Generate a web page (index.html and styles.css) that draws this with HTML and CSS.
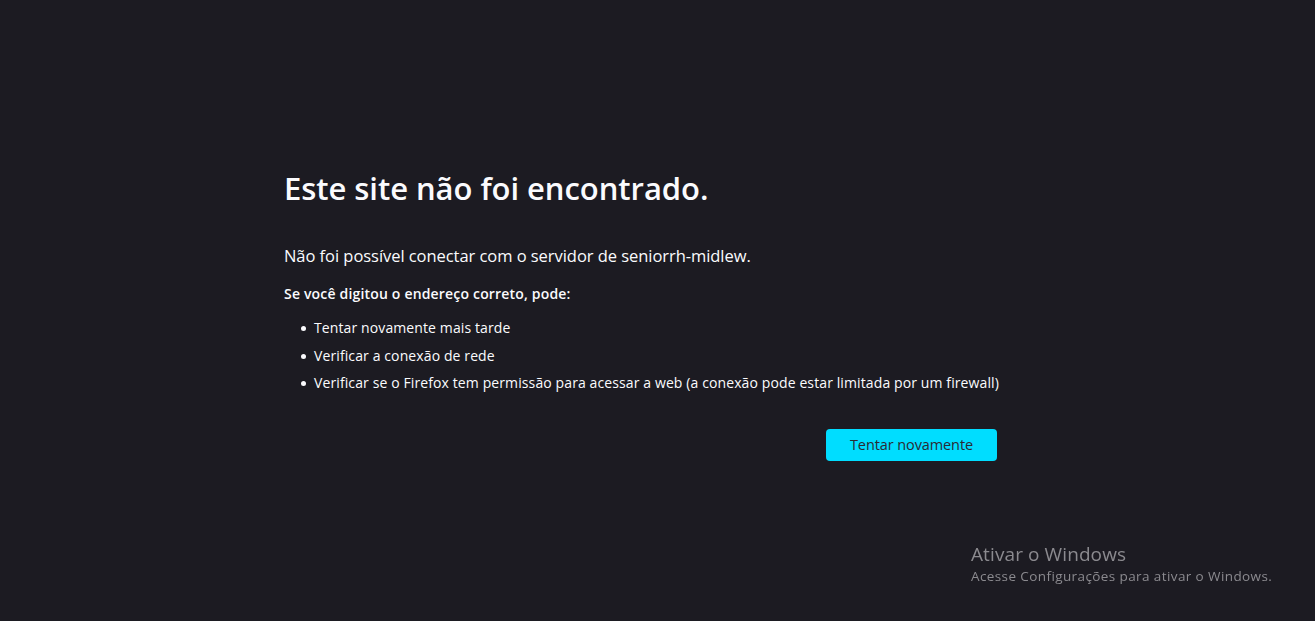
FILE: index.html
```html
<!DOCTYPE html>
<html lang="pt-BR">
<head>
  <meta charset="UTF-8">
  <meta name="viewport" content="width=device-width, initial-scale=1.0">
  <title>Problema ao carregar a página</title>
  <link rel="stylesheet" href="styles.css">
</head>
<body>
  <div class="container">
    <h1 class="title">Este site não foi encontrado.</h1>
    <p class="intro">Não foi possível conectar com o servidor de seniorrh-midlew.</p>
    <p class="hint">Se você digitou o endereço correto, pode:</p>
    <ul class="tips">
      <li>Tentar novamente mais tarde</li>
      <li>Verificar a conexão de rede</li>
      <li>Verificar se o Firefox tem permissão para acessar a web (a conexão pode estar limitada por um firewall)</li>
    </ul>
    <div class="actions">
      <button class="retry">Tentar novamente</button>
    </div>
  </div>

  <div class="watermark">
    <div class="watermark-title">Ativar o Windows</div>
    <div class="watermark-text">Acesse Configurações para ativar o Windows.</div>
  </div>
</body>
</html>
```

FILE: styles.css
```css
* {
  margin: 0;
  padding: 0;
  box-sizing: border-box;
}

html, body {
  height: 100%;
}

body {
  font-family: "Open Sans", "Noto Sans", sans-serif;
  background: #1c1b22;
  color: #fbfbfe;
  overflow: hidden;
}

.container {
  width: 713px;
  margin-left: 284px;
  padding-top: 164px;
}

.title {
  font-size: 31px;
  font-weight: 600;
  line-height: 48px;
  letter-spacing: -0.05px;
  margin-bottom: 32px;
}

.intro {
  font-size: 16.5px;
  line-height: 24px;
  letter-spacing: -0.05px;
  margin-bottom: 14px;
}

.hint {
  font-size: 14px;
  font-weight: 600;
  line-height: 24px;
  letter-spacing: 0.18px;
  margin-bottom: 8px;
}

.tips {
  list-style: none;
  font-size: 14px;
  letter-spacing: 0.11px;
  white-space: nowrap;
}

.tips li {
  position: relative;
  padding-left: 30px;
  line-height: 27.5px;
}

.tips li::before {
  content: "";
  position: absolute;
  left: 17px;
  top: 12px;
  width: 5px;
  height: 5px;
  border-radius: 50%;
  background: #fbfbfe;
}

.actions {
  display: flex;
  justify-content: flex-end;
  margin-top: 32px;
}

.retry {
  width: 171px;
  height: 32px;
  background: #00ddff;
  color: #2b2a33;
  border: none;
  border-radius: 4px;
  font-family: inherit;
  font-size: 14.5px;
  letter-spacing: -0.1px;
  cursor: pointer;
}

.retry:hover {
  background: #80ebff;
}

.watermark {
  position: fixed;
  left: 971px;
  top: 541px;
  color: #8b8a8f;
}

.watermark-title {
  font-size: 19px;
  line-height: 26px;
  letter-spacing: 0.1px;
}

.watermark-text {
  font-size: 13.5px;
  line-height: 19px;
  letter-spacing: 0.4px;
}
```
